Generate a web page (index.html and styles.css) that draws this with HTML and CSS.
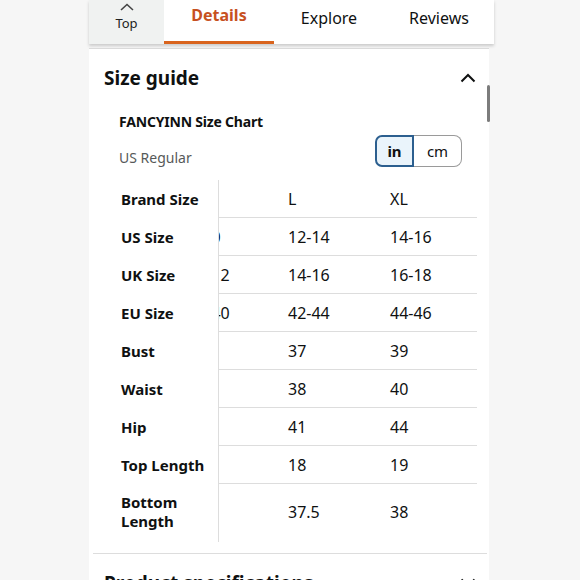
FILE: index.html
```html
<!DOCTYPE html>
<html>
<head>
<meta charset="utf-8">
<link rel="stylesheet" href="styles.css">
</head>
<body>
<div class="page">
  <nav class="tabs">
    <div class="tab-top">
      <svg class="top-chev" width="14" height="8" viewBox="0 0 14 8"><path d="M1 7 L7 1.5 L13 7" fill="none" stroke="#444" stroke-width="1.6"/></svg>
      <span>Top</span>
    </div>
    <div class="tab tab-active">Details</div>
    <div class="tab">Explore</div>
    <div class="tab">Reviews</div>
  </nav>
  <section class="card">
    <div class="scrollbar"></div>
    <header class="sec-head">
      <h2>Size guide</h2>
      <svg class="chev" width="16" height="10" viewBox="0 0 16 10"><path d="M1.5 8.5 L8 2 L14.5 8.5" fill="none" stroke="#0f1111" stroke-width="2"/></svg>
    </header>
    <div class="chart">
      <div class="chart-title">FANCYINN Size Chart</div>
      <div class="chart-sub">
        <span class="sub-label">US Regular</span>
        <div class="toggle">
          <span class="seg seg-on">in</span>
          <span class="seg seg-off">cm</span>
        </div>
      </div>
      <div class="table">
        <div class="col-fixed">
          <div class="cell">Brand Size</div>
          <div class="cell">US Size</div>
          <div class="cell">UK Size</div>
          <div class="cell">EU Size</div>
          <div class="cell">Bust</div>
          <div class="cell">Waist</div>
          <div class="cell">Hip</div>
          <div class="cell">Top Length</div>
          <div class="cell tall">Bottom<br>Length</div>
        </div>
        <div class="scroll">
          <div class="grid">
            <div class="row"><span></span><span>L</span><span>XL</span></div>
            <div class="row"><span>8-10</span><span>12-14</span><span>14-16</span></div>
            <div class="row"><span>10-12</span><span>14-16</span><span>16-18</span></div>
            <div class="row"><span>38-40</span><span>42-44</span><span>44-46</span></div>
            <div class="row"><span></span><span>37</span><span>39</span></div>
            <div class="row"><span></span><span>38</span><span>40</span></div>
            <div class="row"><span></span><span>41</span><span>44</span></div>
            <div class="row"><span></span><span>18</span><span>19</span></div>
            <div class="row tall"><span></span><span>37.5</span><span>38</span></div>
          </div>
        </div>
      </div>
    </div>
    <div class="divider"></div>
    <header class="sec-head">
      <h2>Product specifications</h2>
      <svg class="chev" width="16" height="10" viewBox="0 0 16 10"><path d="M1.5 1.5 L8 8 L14.5 1.5" fill="none" stroke="#0f1111" stroke-width="2"/></svg>
    </header>
  </section>
</div>
</body>
</html>
```
FILE: styles.css
```css
* { box-sizing: border-box; }
html, body { margin: 0; padding: 0; }
body {
  background: #f6f6f6;
  font-family: "Noto Sans", "Open Sans", sans-serif;
  color: #0f1111;
  width: 580px;
  height: 580px;
  overflow: hidden;
}
.page {
  margin-left: 89px;
  width: 405px;
}
.tabs {
  display: flex;
  height: 44px;
  background: #fff;
  box-shadow: 0 2px 3px rgba(0,0,0,0.18);
  position: relative;
  z-index: 1;
}
.tab-top {
  width: 75px;
  background: #f0f2f1;
  display: flex;
  flex-direction: column;
  align-items: center;
  padding-top: 3px;
  font-size: 13px;
  line-height: 16px;
  color: #222;
}
.top-chev { margin-bottom: 4px; }
.tab {
  width: 110px;
  text-align: center;
  font-size: 16px;
  line-height: 20px;
  padding-top: 8px;
}
.tab-active {
  color: #c7511f;
  font-weight: 700;
  padding-top: 5px;
  border-bottom: 3px solid #d9641e;
}
.card {
  position: relative;
  width: 400px;
  margin-top: 4px;
  background: #fff;
  border-top: 1px solid #dcdcdc;
}
.scrollbar {
  position: absolute;
  left: 398px;
  top: 36px;
  width: 3px;
  height: 37px;
  border-radius: 2px;
  background: #7c7c7c;
}
.sec-head {
  display: flex;
  justify-content: space-between;
  align-items: center;
  height: 58px;
  padding: 0 13px 0 15px;
}
.sec-head h2 {
  margin: 0;
  font-size: 19px;
  font-weight: 700;
}
.chart {
  padding-left: 30px;
}
.chart-title {
  font-size: 14px;
  font-weight: 700;
  line-height: 20px;
  margin-top: 5px;
  letter-spacing: -0.2px;
}
.chart-sub {
  display: flex;
  justify-content: space-between;
  align-items: center;
  padding-right: 27px;
  margin-top: 3px;
}
.sub-label {
  font-size: 14px;
  color: #565959;
  padding-top: 12px;
}
.toggle {
  display: flex;
  height: 32px;
}
.seg {
  display: flex;
  align-items: center;
  justify-content: center;
  font-size: 15px;
}
.seg-on {
  width: 39px;
  border: 2.5px solid #2c5f8f;
  border-radius: 7px 0 0 7px;
  background: #eaf4fb;
  font-weight: 700;
}
.seg-off {
  width: 48px;
  border: 1px solid #9a9a9a;
  border-left: none;
  border-radius: 0 8px 8px 0;
}
.table {
  display: flex;
  margin-top: 13px;
  width: 358px;
}
.col-fixed {
  width: 100px;
  border-right: 1px solid #dddddd;
  padding-bottom: 2px;
}
.cell {
  height: 38px;
  display: flex;
  align-items: center;
  padding-left: 2px;
  font-size: 15px;
  font-weight: 700;
  line-height: 19px;
}
.cell.tall { height: 56px; }
.scroll {
  flex: 1;
  overflow: hidden;
}
.grid {
  margin-left: -45px;
}
.row {
  display: grid;
  grid-template-columns: 100px 102px 102px;
  height: 38px;
  align-items: center;
  border-bottom: 1px solid #dddddd;
  font-size: 16px;
}
.row span { padding-left: 14px; }
.row.tall { height: 56px; border-bottom: none; }
.divider {
  height: 1px;
  background: #dddddd;
  margin: 11px 2px 0 4px;
}
```
